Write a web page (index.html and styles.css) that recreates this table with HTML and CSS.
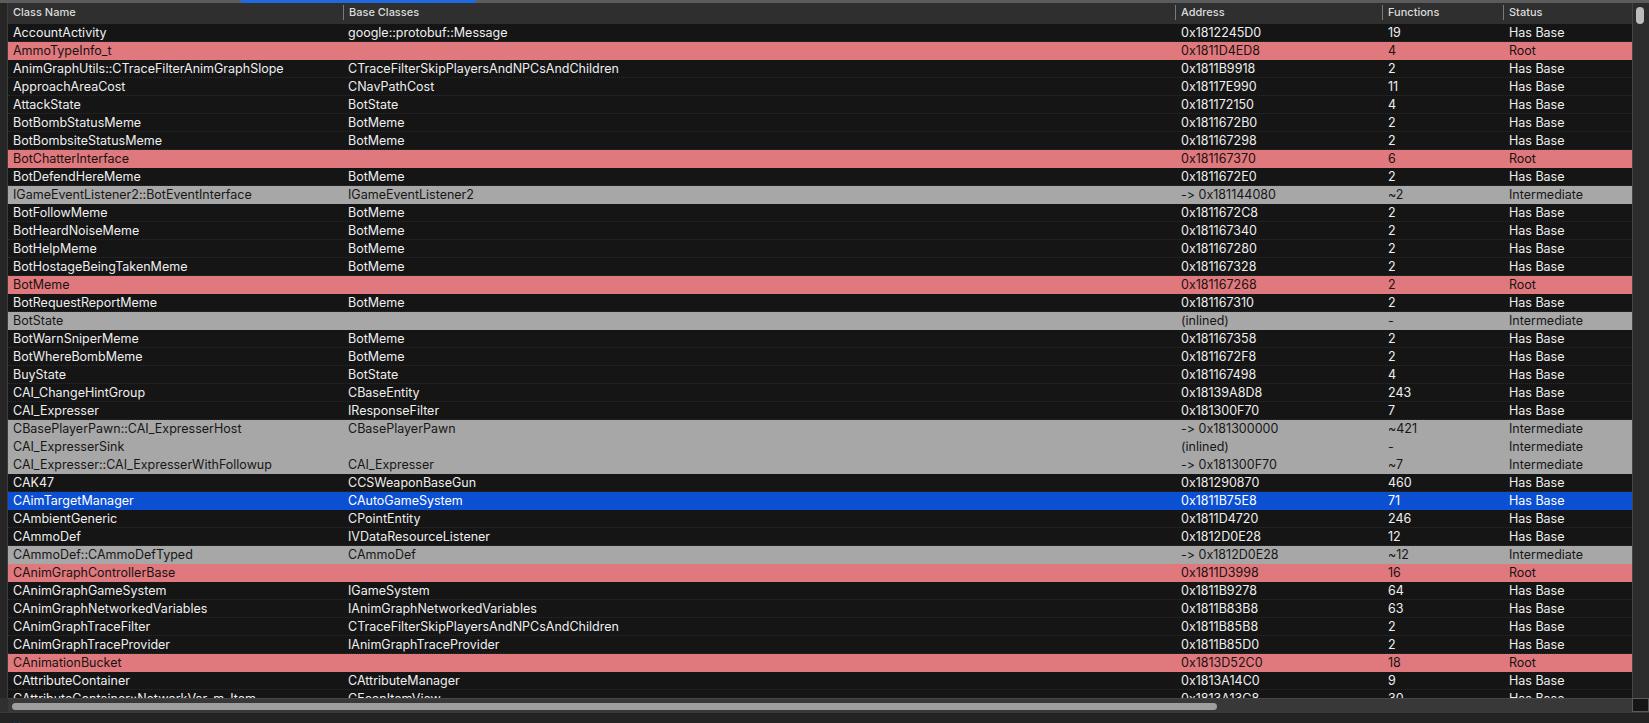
FILE: index.html
```html
<!DOCTYPE html>
<html>
<head>
<meta charset="utf-8">
<link rel="stylesheet" href="styles.css">
</head>
<body>
<div class="topstrip"><div class="toptab"></div></div>
<div class="main">
  <div class="leftedge"></div>
  <div class="table">
    <div class="hdr">
      <div class="hc first">Class Name</div>
      <div class="hc">Base Classes</div>
      <div class="hc">Address</div>
      <div class="hc">Functions</div>
      <div class="hc">Status</div>
    </div>
    <div class="body">
      <div class="row"><div>AccountActivity</div><div>google::protobuf::Message</div><div>0x1812245D0</div><div>19</div><div>Has Base</div></div>
      <div class="row root"><div>AmmoTypeInfo_t</div><div></div><div>0x1811D4ED8</div><div>4</div><div>Root</div></div>
      <div class="row"><div>AnimGraphUtils::CTraceFilterAnimGraphSlope</div><div>CTraceFilterSkipPlayersAndNPCsAndChildren</div><div>0x1811B9918</div><div>2</div><div>Has Base</div></div>
      <div class="row"><div>ApproachAreaCost</div><div>CNavPathCost</div><div>0x18117E990</div><div>11</div><div>Has Base</div></div>
      <div class="row"><div>AttackState</div><div>BotState</div><div>0x181172150</div><div>4</div><div>Has Base</div></div>
      <div class="row"><div>BotBombStatusMeme</div><div>BotMeme</div><div>0x1811672B0</div><div>2</div><div>Has Base</div></div>
      <div class="row"><div>BotBombsiteStatusMeme</div><div>BotMeme</div><div>0x181167298</div><div>2</div><div>Has Base</div></div>
      <div class="row root"><div>BotChatterInterface</div><div></div><div>0x181167370</div><div>6</div><div>Root</div></div>
      <div class="row"><div>BotDefendHereMeme</div><div>BotMeme</div><div>0x1811672E0</div><div>2</div><div>Has Base</div></div>
      <div class="row inter"><div>IGameEventListener2::BotEventInterface</div><div>IGameEventListener2</div><div>-&gt; 0x181144080</div><div>~2</div><div>Intermediate</div></div>
      <div class="row"><div>BotFollowMeme</div><div>BotMeme</div><div>0x1811672C8</div><div>2</div><div>Has Base</div></div>
      <div class="row"><div>BotHeardNoiseMeme</div><div>BotMeme</div><div>0x181167340</div><div>2</div><div>Has Base</div></div>
      <div class="row"><div>BotHelpMeme</div><div>BotMeme</div><div>0x181167280</div><div>2</div><div>Has Base</div></div>
      <div class="row"><div>BotHostageBeingTakenMeme</div><div>BotMeme</div><div>0x181167328</div><div>2</div><div>Has Base</div></div>
      <div class="row root"><div>BotMeme</div><div></div><div>0x181167268</div><div>2</div><div>Root</div></div>
      <div class="row"><div>BotRequestReportMeme</div><div>BotMeme</div><div>0x181167310</div><div>2</div><div>Has Base</div></div>
      <div class="row inter"><div>BotState</div><div></div><div>(inlined)</div><div>-</div><div>Intermediate</div></div>
      <div class="row"><div>BotWarnSniperMeme</div><div>BotMeme</div><div>0x181167358</div><div>2</div><div>Has Base</div></div>
      <div class="row"><div>BotWhereBombMeme</div><div>BotMeme</div><div>0x1811672F8</div><div>2</div><div>Has Base</div></div>
      <div class="row"><div>BuyState</div><div>BotState</div><div>0x181167498</div><div>4</div><div>Has Base</div></div>
      <div class="row"><div>CAI_ChangeHintGroup</div><div>CBaseEntity</div><div>0x18139A8D8</div><div>243</div><div>Has Base</div></div>
      <div class="row"><div>CAI_Expresser</div><div>IResponseFilter</div><div>0x181300F70</div><div>7</div><div>Has Base</div></div>
      <div class="row inter"><div>CBasePlayerPawn::CAI_ExpresserHost</div><div>CBasePlayerPawn</div><div>-&gt; 0x181300000</div><div>~421</div><div>Intermediate</div></div>
      <div class="row inter"><div>CAI_ExpresserSink</div><div></div><div>(inlined)</div><div>-</div><div>Intermediate</div></div>
      <div class="row inter"><div>CAI_Expresser::CAI_ExpresserWithFollowup</div><div>CAI_Expresser</div><div>-&gt; 0x181300F70</div><div>~7</div><div>Intermediate</div></div>
      <div class="row"><div>CAK47</div><div>CCSWeaponBaseGun</div><div>0x181290870</div><div>460</div><div>Has Base</div></div>
      <div class="row sel"><div>CAimTargetManager</div><div>CAutoGameSystem</div><div>0x1811B75E8</div><div>71</div><div>Has Base</div></div>
      <div class="row"><div>CAmbientGeneric</div><div>CPointEntity</div><div>0x1811D4720</div><div>246</div><div>Has Base</div></div>
      <div class="row"><div>CAmmoDef</div><div>IVDataResourceListener</div><div>0x1812D0E28</div><div>12</div><div>Has Base</div></div>
      <div class="row inter"><div>CAmmoDef::CAmmoDefTyped</div><div>CAmmoDef</div><div>-&gt; 0x1812D0E28</div><div>~12</div><div>Intermediate</div></div>
      <div class="row root"><div>CAnimGraphControllerBase</div><div></div><div>0x1811D3998</div><div>16</div><div>Root</div></div>
      <div class="row"><div>CAnimGraphGameSystem</div><div>IGameSystem</div><div>0x1811B9278</div><div>64</div><div>Has Base</div></div>
      <div class="row"><div>CAnimGraphNetworkedVariables</div><div>IAnimGraphNetworkedVariables</div><div>0x1811B83B8</div><div>63</div><div>Has Base</div></div>
      <div class="row"><div>CAnimGraphTraceFilter</div><div>CTraceFilterSkipPlayersAndNPCsAndChildren</div><div>0x1811B85B8</div><div>2</div><div>Has Base</div></div>
      <div class="row"><div>CAnimGraphTraceProvider</div><div>IAnimGraphTraceProvider</div><div>0x1811B85D0</div><div>2</div><div>Has Base</div></div>
      <div class="row root"><div>CAnimationBucket</div><div></div><div>0x1813D52C0</div><div>18</div><div>Root</div></div>
      <div class="row"><div>CAttributeContainer</div><div>CAttributeManager</div><div>0x1813A14C0</div><div>9</div><div>Has Base</div></div>
      <div class="row"><div>CAttributeContainer::NetworkVar_m_Item</div><div>CEconItemView</div><div>0x1813A13C8</div><div>30</div><div>Has Base</div></div>
    </div>
  </div>
  <div class="vscroll"><div class="vthumb"></div></div>
</div>
<div class="hbar">
  <div class="hleft"></div>
  <div class="htrack"><div class="hthumb"></div></div>
  <div class="corner"></div>
</div>
<div class="footer">
  <svg class="ficon" width="10" height="11" viewBox="0 0 10 11"><circle cx="2.5" cy="6" r="2.3" fill="#2f6fe0"/><circle cx="7.5" cy="6" r="2.3" fill="#2f6fe0"/></svg>
</div>
</body>
</html>
```

FILE: styles.css
```css
html, body {
  margin: 0;
  padding: 0;
  width: 1649px;
  height: 723px;
  overflow: hidden;
  background: #1f1f1f;
  font-family: Inter, "Liberation Sans", sans-serif;
  font-feature-settings: "calt" 0, "liga" 0;
  font-variant-ligatures: none;
}

.topstrip {
  height: 3px;
  background: #5c5c5c;
  display: flex;
}
.toptab {
  margin-left: 241px;
  width: 235px;
  height: 3px;
  background: #1f6ae0;
}

.main {
  display: flex;
  height: 695px;
}

.leftedge {
  width: 7px;
  background: #262626;
  border-right: 1px solid #3d3d3d;
}

.table {
  width: 1624px;
  display: flex;
  flex-direction: column;
  overflow: hidden;
  background: #151515;
}

.hdr {
  height: 21px;
  flex: none;
  display: grid;
  grid-template-columns: 335px 832px 207px 121px 129px;
  background: #2f2f2f;
}
.hc {
  font-size: 11px;
  font-weight: 500;
  color: #dcdcdc;
  line-height: 14px;
  padding: 0 0 0 5px;
  border-left: 1px solid #7a7a7a;
  margin: 2px 0 4px 0;
  height: 15px;
}
.hc.first {
  border-left: none;
}

.body {
  flex: 1;
  overflow: hidden;
}

.row {
  display: grid;
  grid-template-columns: 335px 832px 207px 121px 129px;
  height: 18px;
  box-sizing: border-box;
  border-bottom: 1px dotted #2b2b2b;
  color: #efefef;
  font-size: 12.5px;
  line-height: 17px;
}
.row > div {
  padding-left: 5px;
  white-space: nowrap;
  overflow: hidden;
}
.row > div:nth-child(3),
.row > div:nth-child(4),
.row > div:nth-child(5) { padding-left: 6px; }

.row.root {
  background: #df797d;
  color: #1b1111;
  border-bottom-color: #df797d;
}
.row.inter {
  background: #a7a7a7;
  color: #161616;
  border-bottom-color: #a7a7a7;
}
.row.sel {
  background: #0b4fd3;
  color: #ffffff;
  border-bottom-color: #0b4fd3;
}

.vscroll {
  width: 16px;
  background: #2c2c2c;
  border-left: 1px solid #444;
  display: flex;
  flex-direction: column;
  align-items: flex-start;
}
.vthumb {
  margin: 4px 0 0 3px;
  width: 8px;
  height: 17px;
  border-radius: 4px;
  background: #bcbcbc;
}

.hbar {
  display: flex;
  height: 14px;
}
.hleft {
  width: 8px;
  background: #303030;
}
.htrack {
  width: 1624px;
  background: #383838;
  border-top: 1px solid #474747;
  box-sizing: border-box;
  display: flex;
  align-items: flex-start;
}
.hthumb {
  margin: 4px 0 0 4px;
  width: 1205px;
  height: 7px;
  border-radius: 4px;
  background: #9e9e9e;
}
.corner {
  width: 17px;
  background: #161616;
  border: 1px solid #5a5a5a;
  box-sizing: border-box;
}

.footer {
  height: 11px;
  background: #232323;
  border-top: 1px solid #3a3a3a;
  display: flex;
  align-items: flex-end;
  padding-left: 12px;
}
.ficon {
  display: block;
  margin-bottom: -6px;
}
```
